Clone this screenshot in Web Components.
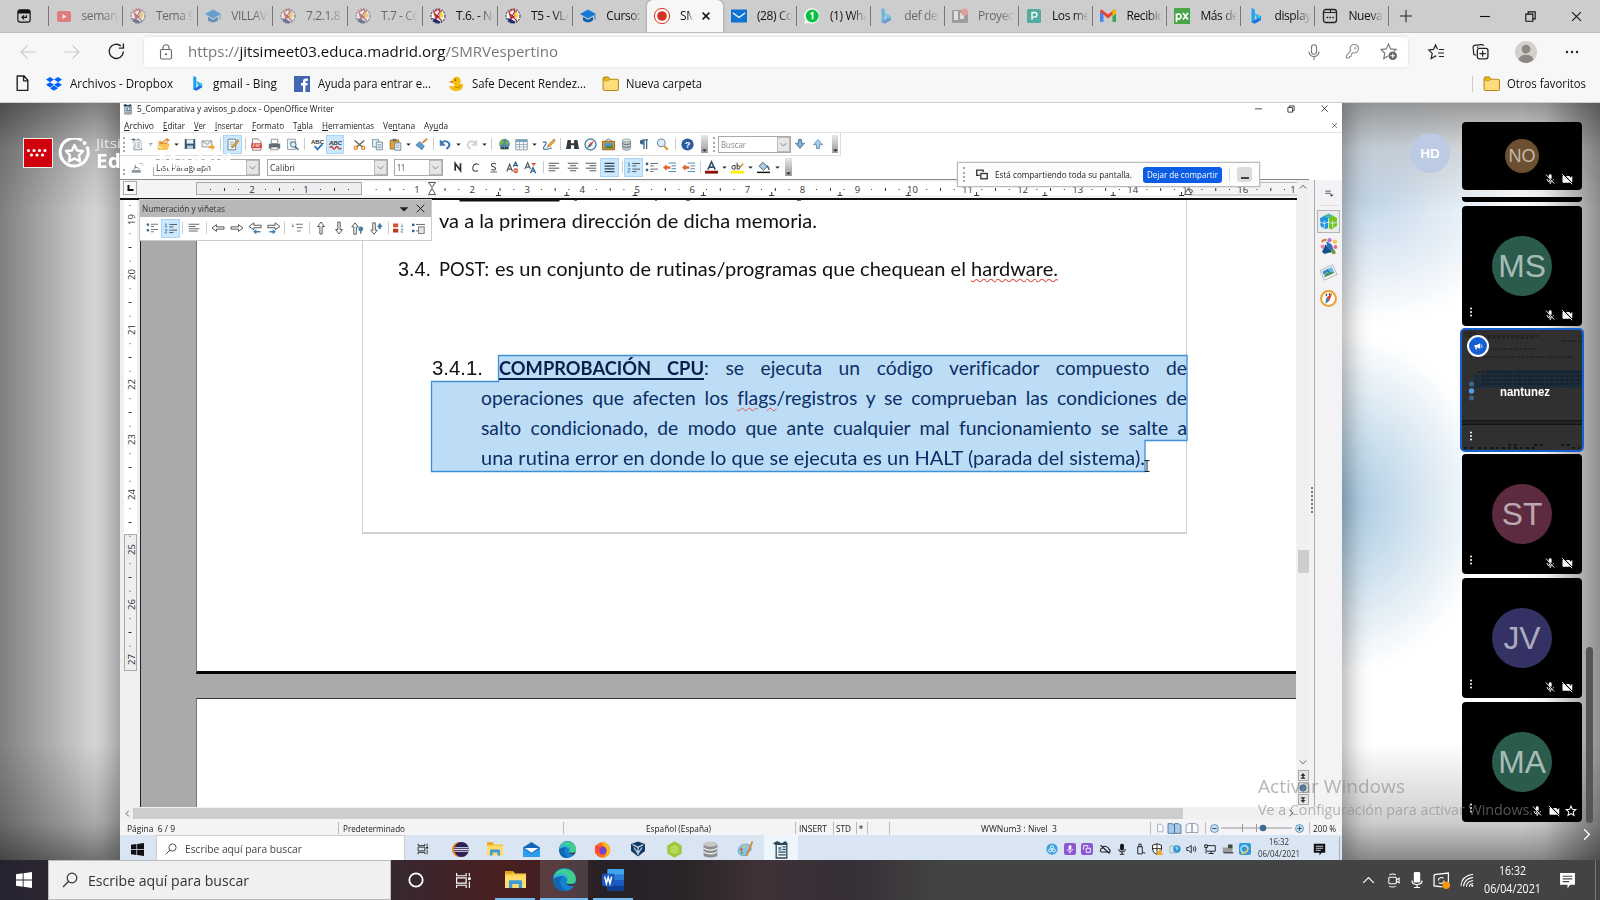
<!DOCTYPE html>
<html lang="es">
<head>
<meta charset="utf-8">
<title>SMRVespertino</title>
<style>
html,body{margin:0;padding:0}
body{width:1600px;height:900px;overflow:hidden;font-family:"Open Sans","Noto Sans",sans-serif;font-size:12px;color:#222}
</style>
</head>
<body>
<desktop-app></desktop-app>
<script>
const BASE = '*{box-sizing:border-box}';
function define(name, css, html, ready){
  customElements.define(name, class extends HTMLElement{
    connectedCallback(){
      if(this.shadowRoot) return;
      const r = this.attachShadow({mode:'open'});
      r.innerHTML = `<style>${BASE}${css}</style>` + (typeof html === 'function' ? html(this) : html);
      if(ready) ready(this, r);
    }
  });
}

/* Lays [x, width, markup] entries out in one flex line, turning the x values into gaps. */
function line(start, items){
  let end = start;
  return items.map(([x,w,h])=>{
    const m = x-end; end = x+w;
    return `<span style="display:flex;align-items:center;justify-content:center;flex:none;width:${w}px;height:100%;margin-left:${m}px">${h}</span>`;
  }).join('');
}
/* Same, with entries given by their centre. */
const mid = (c,w,h)=>[c-w/2,w,h];
const ic = (n,s=16)=>`<ui-icon name="${n}" size="${s}"></ui-icon>`;
const fit = (w,t,st='')=>`<fit-text w="${w}" style="${st}">${t}</fit-text>`;
const S = (c,w=1.2)=>`fill="none" stroke="${c}" stroke-width="${w}"`;
</script>
<script>
const ICONS = {
  tabact:`<rect x="1" y="1" width="14" height="14" rx="2.5" ${S('#111',1.3)}/><path d="M1 3.5q0-2.5 2.5-2.5h9q2.5 0 2.5 2.5v1.5H1z" fill="#111"/><path d="M10.8 7v2.5H6M8 7.2L5.7 9.5 8 11.8" ${S('#111',1.3)}/>`,
  yt:`<rect x="1" y="3" width="14" height="11" rx="2.5" fill="#f03a3a"/><path d="M6.5 6v5l4-2.5z" fill="#fff"/>`,
  moodle:`<circle cx="8" cy="8" r="7" fill="#fff"/><circle cx="8" cy="8" r="7" fill="none" stroke="#556" stroke-width="1.3" stroke-dasharray="2 1"/><path d="M4 4l4-2.5 3 2-1 4-4 3z" fill="#fff" stroke="#d5333a" stroke-width="1.4"/><path d="M5 6l4 4 3 3M10 3l-4 7" ${S('#a3222b',1.1)}/><path d="M10.5 3.5l3 3.5-2 4-2-3z" fill="#f5d33c"/><path d="M2 10l4 1 5 3-3 1.5-4-1.5z" fill="#242c70"/>`,
  cap:`<path d="M0 6l8-4.5L16 6 8 10.5z" fill="#1678d2"/><path d="M3 8.8v3.4c3 2.8 7 2.8 10 0V8.8L8 11.8z" fill="#1160ad"/><path d="M15 6.5v5" ${S('#1678d2',1)}/>`,
  rec:`<circle cx="8" cy="8" r="7.6" fill="#fff" stroke="#d93025" stroke-width="1"/><circle cx="8" cy="8" r="4.8" fill="#d93025"/>`,
  mailt:`<rect x="0" y="1.5" width="16" height="13" fill="#0f74d1"/><path d="M2 5l6 4.5L14 5" ${S('#fff',1.3)}/>`,
  wa:`<path d="M8 .2a7.7 7.7 0 1 1-3.8 14.5L.3 15.8l1-4A7.7 7.7 0 0 1 8 .2z" fill="#fff"/><circle cx="8.2" cy="8" r="6.5" fill="#0ac041"/><path d="M6.6 6l2-1.3v6.6" ${S('#fff',1.7)}/>`,
  bing:`<path d="M3.5 0l3.3 1.2v11.6L3.5 15z" fill="#1ca4f2"/><path d="M6.8 5.5l6.2 3v3.5L6.8 15.7 3.5 14l5.5-3.2z" fill="#1b6fe0"/><path d="M6.8 5.5l6.2 3-1 2.4-3.4-1.4z" fill="#25c7f5"/>`,
  proy:`<rect x="0" y="2" width="16" height="13" rx="1.5" fill="#777"/><rect x="2" y="3" width="4" height="9" fill="#eee"/><rect x="8" y="5" width="4" height="6" fill="#eee"/><circle cx="12.5" cy="4" r="3.5" fill="#ee7a70"/>`,
  pd:`<rect x="1" y="1" width="14" height="14" rx="1.5" fill="#53ab9f"/><path d="M6 12V4.5h2.5q2.5 0 2.5 2.3T8.5 9.2H6.5" ${S('#fff',1.3)}/>`,
  gm:`<path d="M0 3.5h3.5V14H1q-1 0-1-1z" fill="#4285f4"/><path d="M12.5 3.5H16V13q0 1-1 1h-2.5z" fill="#34a853"/><path d="M0 3.5Q1-.2 3.5 3L8 6.5 12.5 3Q15-.2 16 3.5L8 10.5z" fill="#ea4335"/><path d="M12.5 3Q15-.2 16 3.5v2l-3.5 2.7z" fill="#fbbc04"/>`,
  px:`<rect width="16" height="16" fill="#48a548"/><path d="M2.5 14V5.5M2.5 9a2.3 2.5 0 1 0 0-1M9 5l5 6.5M14 5l-5 6.5" ${S('#fff',1.7)}/>`,
  newt:`<rect x="1.5" y="1.5" width="13" height="13" rx="2.5" ${S('#222',1.3)}/><path d="M2 4.5h12M8.5 2v2.5" ${S('#222',1.2)}/><path d="M4.5 9.5h1.7M7.3 9.5H9M10.2 9.5h1.6" ${S('#222',1.7)}/>`,
  plus:`<path d="M8 1v14M1 8h14" ${S('#222',1.2)}/>`,
  x:`<path d="M2.5 2.5l11 11M13.5 2.5l-11 11" ${S('#111',1.3)}/>`,
  xb:`<path d="M3.5 3.5l9 9M12.5 3.5l-9 9" ${S('#111',2)}/>`,
  min:`<path d="M3 8.5h10" ${S('#111',1.1)}/>`,
  rest:`<path d="M3 5.5h7.5V13H3zM5.5 5.5V3H13v7.5h-2.5" ${S('#111',1.2)}/>`,
  back:`<path d="M15.5 8H1M7.5 1.5L1 8l6.5 6.5" ${S('#cacaca',1.1)}/>`,
  fwd:`<path d="M.5 8H15M8.5 1.5L15 8l-6.5 6.5" ${S('#cacaca',1.1)}/>`,
  reload:`<path d="M14.5 8a6.7 6.7 0 1 1-2.3-5.2M14.5.5v4.3h-4.3" ${S('#222',1.3)}/>`,
  lock:`<rect x="2.5" y="5.5" width="11" height="9.5" rx="1.5" ${S('#666',1.1)}/><path d="M5 5.5V3.7a3 3 0 0 1 6 0v1.8" ${S('#666',1.1)}/><circle cx="8" cy="10.2" r="1" fill="#555"/>`,
  mic:`<rect x="5.5" y="0.7" width="5" height="9.6" rx="2.5" ${S('#777',1.1)}/><path d="M3 7.5a5 5 0 0 0 10 0M8 12.7V16" ${S('#777',1.1)}/>`,
  key:`<path d="M8.3 9.2a4.5 4.5 0 1 0-2.3-2L1.5 12.5V15h3l.3-1.8 1.7-.2.2-1.9z" ${S('#888',1.1)}/><circle cx="11" cy="4.5" r="1" ${S('#888',.8)}/>`,
  starp:`<path d="M13 7.5L15 6.1l-5-.5L8 1 5.9 5.6 1 6.1l3.5 3.6-1 5L7.5 12.3" ${S('#777',1.1)}/><circle cx="12" cy="12" r="4" fill="#666"/><path d="M12 9.8v4.4M9.8 12h4.4" ${S('#fff',1)}/>`,
  starl:`<path d="M9.5 5.2L7.5 1 5.5 5.4.8 6l3.4 3.4-1 5.1 4.3-2.5.8.5M11 5.5h5M10 9h6M11 12.5h5" ${S('#222',1.2)}/>`,
  coll:`<path d="M4 11.5L1.7 10.8 1 4q0-1.4 1.3-1.7L9 1.5q1.5-.2 1.7 1.3M5 4.5q0-1 1-1" ${S('#222',1.1)}/><rect x="5" y="5" width="10" height="10" rx="2" ${S('#222',1.2)}/><path d="M10 7v6M7 10h6" ${S('#222',1.1)}/>`,
  user:`<circle cx="8" cy="8" r="8" fill="#d4d1cd"/><circle cx="8" cy="5.9" r="3.2" fill="#8d8882"/><path d="M2.5 13.5q1-3.5 5.5-3.5t5.5 3.5Q11 16 8 16t-5.500-2.500z" fill="#8d8882"/>`,
  dots:`<circle cx="3" cy="8" r="1.2" fill="#222"/><circle cx="8" cy="8" r="1.2" fill="#222"/><circle cx="13" cy="8" r="1.2" fill="#222"/>`,
  page:`<path d="M3 1h6.5L13 5v9.5H3zM9 1.2V5.5h4" ${S('#222',1.3)} stroke-linejoin="round"/>`,
  dbx:`<path d="M4 1l4 2.6L4 6.2 0 3.6zM12 1l4 2.6-4 2.6-4-2.6zM4 6.2l4 2.6-4 2.6L0 8.8zM12 6.2l4 2.6-4 2.6-4-2.6zM4 12.2l4-2.6 4 2.6-4 2.6z" fill="#0061fe"/>`,
  fb:`<rect width="16" height="16" fill="#4267b2"/><path d="M9 16V9.5H7V7h2V5.3Q9 2.5 12 2.5h1.8v2.4h-1.3q-1.1 0-1.1 1V7h2.3l-.4 2.5h-1.9V16z" fill="#fff"/>`,
  duck:`<circle cx="8.5" cy="5" r="4.2" fill="#f6bc0b"/><path d="M4.8 4.5L.5 5.8l4.3 1.4z" fill="#e0801a"/><path d="M1.5 9q2 2.5 6 0 4-2 7.5-1 .5 7-6.5 7T1.5 9z" fill="#f6bc0b"/><circle cx="7.5" cy="4" r=".8" fill="#222"/><path d="M7 11q3 2 6-1" ${S('#b77a00',.8)}/>`,
  folder:`<path d="M1 3.5q0-1.5 1.5-1.5h3.3L7.5 4H14q1.5 0 1.5 1.5v7.7q0 1.3-1.5 1.3H2.5Q1 14.5 1 13z" fill="#ffdc7d" stroke="#b98a17" stroke-width="1"/><path d="M1.5 5.5h4L7.5 4l-1.7-1.8H2.5z" fill="#edb912" stroke="#b98a17" stroke-width=".6"/>`,
  win:`<path d="M0 2.3l6.7-1v6.2H0zM7.6 1.2L16 0v7.5H7.6zM0 8.4h6.7v6.3L0 13.7zM7.6 8.4H16V16l-8.4-1.2z" fill="currentColor"/>`,
  mag:`<circle cx="10" cy="6" r="4.8" ${S('currentColor',1.2)}/><path d="M6.5 9.5L1 15" ${S('currentColor',1.3)}/>`,
  cort:`<circle cx="8" cy="8" r="6.7" ${S('#fff',1.8)}/>`,
  tview:`<path d="M1.5 1v2.5h9V1M1.5 15v-2.5h9V15M1.5 5.5h9v5h-9zM13.5 1v3M13.5 9v6" ${S('currentColor',1.1)}/><rect x="12.3" y="5" width="2.5" height="2.5" fill="currentColor"/>`,
  expl:`<path d="M0 1.5h6l1.5 2H16V14H0z" fill="#f8c93e"/><path d="M0 5h16v9.5H0z" fill="#ffdb6c"/><path d="M3 14.5V9.5q0-1 1-1h8q1 0 1 1v5h-2.5v-3h-5v3z" fill="#3f9bd8"/><path d="M0 1.5h6v2H0z" fill="#e2a118"/>`,
  edge:`<circle cx="8" cy="8" r="8" fill="#1683d2"/><path d="M.3 6.5A8 8 0 0 1 16 7.5q0 3.5-3.8 3.5-2.7 0-3-1 1.3-1 .8-2.5C9 5 3 3.5.3 6.5z" fill="#3ecf8e"/><path d="M.3 6.5Q4 2.5 8.5 5.5 5 6 5 9.5q0 4 4.5 6.4Q2 17 .2 10z" fill="#1266b4"/><path d="M0 8q1-5 7-4.2Q11 4.7 10 8 8.5 5 4.5 5.8 1.5 6.2 0 8z" fill="#30b7d6"/><path d="M9 10.1Q10 11.5 13 11.3q2.2 0 2.6-1.3l-.8 2.3q-4 1-5.8-2.2z" fill="#4b2a33"/>`,
  word:`<rect x="4" y="0" width="12" height="16" rx="1" fill="#2b7cd3"/><path d="M4 0h11q1 0 1 1v3H4z" fill="#41a5ee"/><path d="M4 8h12v4H4z" fill="#185abd"/><path d="M4 12h12v3q0 1-1 1H5q-1 0-1-1z" fill="#103f91"/><rect x="0" y="3.5" width="9" height="9" rx="1" fill="#185abd"/><path d="M2 5.5l1.2 5L4.5 6l1.3 4.5L7 5.5" ${S('#fff',1.1)}/>`,
  ecl:`<circle cx="7" cy="8" r="7" fill="#e88a1a"/><circle cx="9" cy="8" r="7" fill="#2c2255"/><path d="M2.3 6.3h13.5M2 8h14M2.3 9.7h13.5" ${S('#e9e4f5',.9)}/>`,
  mailw:`<path d="M0 6l8-5 8 5v9H0z" fill="#1466b8"/><path d="M1.5 6.5h13L8 11z" fill="#fff"/><path d="M0 6.5L8 12l8-5.5V15H0z" fill="#2a9df0"/>`,
  ff:`<circle cx="8" cy="8.5" r="7.3" fill="#ff6b1c"/><path d="M9 0q6 4 6.3 9-1 6-7 6.8Q12 13 12 9T7 3q2-1 2-3z" fill="#ffbb22"/><circle cx="8" cy="9" r="3.7" fill="#7542c9"/><path d="M1 4q3 1 6 1.5Q4 8 6 11l-4.5 1z" fill="#ff4438"/>`,
  vbox:`<path d="M1 3l7-2.5L15 3v7l-7 5.5L1 10z" fill="#173a63"/><path d="M2.5 3.5l5.5 2.8 5.5-2.8M8 6.5V14M4 6.5l4 6 4-6" ${S('#cbe0f2',1.2)}/>`,
  hex:`<path d="M8 .3l6.8 3.9v7.6L8 15.7 1.2 11.8V4.2z" fill="#9cc83c"/><path d="M8 3.5l4 2.3v4.6L8 12.5l-4-2.1V5.8z" fill="#b5db5a"/>`,
  dbg:`<path d="M1.5 3v10q0 2.5 6.5 2.5t6.500-2.500V3z" fill="#8d8d8d"/><path d="M1.5 6.5q2 2 6.5 2t6.500-2M1.5 10q2 2 6.5 2t6.500-2" ${S('#ececec',1.2)}/><ellipse cx="8" cy="3" rx="6.5" ry="2.5" fill="#c6c6c6"/>`,
  paint:`<path d="M1 9q1-6 7-6t5.500 5q-.5 2-3 1.8-2 0-1.5 2 .2 2.2-2 2.2Q1 14 1 9z" fill="#8cc4e6" stroke="#5a88a8" stroke-width=".5"/><circle cx="4" cy="8" r="1.1" fill="#e54040"/><circle cx="7" cy="5.5" r="1.1" fill="#f3c61c"/><circle cx="4.5" cy="11" r="1.1" fill="#3da646"/><path d="M14.5.5L9 14" ${S('#d38830',1.7)}/>`,
  writer:`<path d="M3 3h10v13H3z" fill="#f2f8fc" stroke="#2a4658" stroke-width="1.2"/><path d="M0 2l4-2 4 2 4-2 2 3-6 1-6-.5z" fill="#2a4658"/><path d="M9 5.5h3M9 8h3M5 10.5h7M5 13h7" ${S('#2a4658',1.2)}/><path d="M5 5.5h3V9H5z" fill="#5a90b4"/>`,
  newdoc:`<path d="M3.5 2h7L13 5v9.5H3.5z" fill="#e9f0f5" stroke="#78858f" stroke-width="1"/><path d="M1 2.5q2-2 4 0t4-1.5" ${S('#4a6575',1.5)}/><path d="M5 6h6M5 8.5h6M5 11h6" ${S('#90a0ac',1.2)}/>`,
  open:`<path d="M1 3.5h5l1.5 2H13V14H1z" fill="#d48b25"/><path d="M3.5 7H16l-3 7.5H1z" fill="#ffc355"/><path d="M8 5q1-3.5 5-2.5M11.5.5l3 2-2.2 2.3" ${S('#d9781e',1.4)}/>`,
  save:`<path d="M1 1.5h14v13H1z" fill="#33566d"/><rect x="3.5" y="2" width="9" height="5.5" fill="#eaf3f9"/><rect x="4" y="10" width="8" height="4.5" fill="#b9cbd6"/>`,
  mailo:`<path d="M0 3.5h12v7.5H0z" fill="#f3f3ee" stroke="#7f8a90"/><path d="M0 3.5l6 4.5 6-4.5" ${S('#7f8a90',1)}/><path d="M8 10h4V7.5l4 4-4 3.5v-2.5H8z" fill="#f1a52d"/>`,
  edit:`<path d="M2.5 1.5h9.5v13H2.5z" fill="#fff" stroke="#52707e"/><path d="M4.5 5h5M4.5 7.5h5M4.5 10h3" ${S('#7592a1',1)}/><path d="M14.5 2L8 9.5l-1 3 2.7-1.3L16 4z" fill="#f0a536" stroke="#7c4c1c" stroke-width=".6"/>`,
  pdf:`<path d="M3 1h7l3.5 3.5V15H3z" fill="#f6f6f6" stroke="#87666a"/><rect x="1.5" y="6.5" width="13" height="6" fill="#d6453c"/><path d="M4 11V8.3h2M7.5 11V8.3h1.5v2.3M12.7 8.3h-2V11" ${S('#fff',.9)}/>`,
  print:`<path d="M4 1.5h8V7H4z" fill="#fff" stroke="#70787c"/><path d="M1 7h14v6H1z" fill="#626e75"/><path d="M3.5 11h9v3.5h-9z" fill="#e9eef0" stroke="#555" stroke-width=".7"/>`,
  prev:`<path d="M2 1.5h9.5V14H2z" fill="#fff" stroke="#74848e"/><path d="M4 4.5h5M4 7h3" ${S('#8fa0ab',1)}/><circle cx="9" cy="8" r="3.4" fill="#d3ebfa" stroke="#48687c" stroke-width="1.2"/><path d="M11.3 10.5l4 4" ${S('#48687c',1.9)}/>`,
  abc:`<text x="8" y="7" text-anchor="middle" font-size="7.5" font-weight="700" font-family="Liberation Sans" fill="#333">ABC</text><path d="M4.5 10l3.5 4 6-6.5" ${S('#2f79b9',2.2)}/>`,
  abcr:`<text x="8" y="8" text-anchor="middle" font-size="7.5" font-weight="700" font-family="Liberation Sans" fill="#333">ABC</text><path d="M1 12q1.7-3 3.5 0t3.500 0 3.500 0 3.500 0" ${S('#cf2c1e',1.7)}/>`,
  cut:`<path d="M2 3l10 8.5M14 3L4 11.5" ${S('#5a6468',1.7)}/><circle cx="3.5" cy="12" r="2" ${S('#e5862a',1.6)}/><circle cx="12.5" cy="12" r="2" ${S('#e5862a',1.6)}/>`,
  copy:`<path d="M2 2h7.5v9H2z" fill="#eef4f8" stroke="#5e7f92"/><path d="M6.5 5h7.5v9.5H6.5z" fill="#eef4f8" stroke="#5e7f92"/><path d="M8 8h4.5M8 10h4.5M8 12h4.5" ${S('#6e97b1',.9)}/>`,
  paste:`<path d="M1.5 2.5h10.5v11H1.5z" fill="#e1a23a" stroke="#8c5f1b"/><path d="M4.5 1h4.5v3H4.5z" fill="#65717a"/><path d="M7 6h7.5v9H7z" fill="#eaf3fa" stroke="#5e7f92"/><path d="M8.5 9h4.5M8.5 11.5h4.5" ${S('#6e97b1',.9)}/>`,
  brush:`<path d="M15 1L9 6" ${S('#d38a35',2.4)}/><path d="M6 4.5l5.5 5.5-3 4.5-7.5-6z" fill="#5e9dd1" stroke="#2e5d86" stroke-width=".7"/>`,
  undo:`<path d="M2 6q6-4 10 0 2.5 4-3 7.5" ${S('#3c7ab0',2.6)}/><path d="M1 1.5V9.5h7.5z" fill="#3c7ab0"/>`,
  redo:`<path d="M14 6Q8 2 4 6q-2.5 4 3 7.5" ${S('#cfd3d5',2.2)}/><path d="M15 1.5V9.5H7.5z" fill="#cfd3d5"/>`,
  globe:`<circle cx="8" cy="7.5" r="6.5" fill="#4e86ad"/><path d="M3 3q3-2 4 0T5 8 2 7zM10 2.5l3.5 3-2.5 4-2-3z" fill="#82b541"/><path d="M3 12.5h4.5M8.5 12.5H13" ${S('#344',2.4)}/>`,
  table:`<path d="M1 2h14v12.5H1z" fill="#fff" stroke="#708694"/><path d="M1 2h14v3H1z" fill="#7fa6c3"/><path d="M1 8h14M1 11h14M5.5 2v12M10.5 2v12" ${S('#8299a8',.9)}/>`,
  draw:`<path d="M15 1L8 8l-1.5 3.5L10 10l6-6z" fill="#f0a536" stroke="#88561c" stroke-width=".6"/><path d="M1 5h4q1 1-2 5t1 4 8-2" ${S('#4179af',1.4)}/>`,
  bino:`<path d="M2 2.5h4v4h4v-4h4l2 11h-6V9H6v4.5H0z" fill="#333b40"/>`,
  comp:`<circle cx="8" cy="8" r="6.8" fill="#eef6fb" stroke="#47718e" stroke-width="1.5"/><path d="M12.5 3L9 9.5 6.8 7z" fill="#dc3e33"/><path d="M3.5 13l3.3-6L9 9.5z" fill="#35617f"/>`,
  gal:`<path d="M0.5 4h15v10.5H.5z" fill="#dd9226" stroke="#85541a"/><rect x="3" y="6" width="10" height="6.5" fill="#4b96c6"/><path d="M3 12.5l4-3 3 1 3-1.5v3.5z" fill="#4f7c2c"/><path d="M4 4l4-3 4 3" ${S('#555',1)}/>`,
  db:`<path d="M3 3v10q0 2 5 2t5-2V3z" fill="#c7ced2" stroke="#6c7880" stroke-width=".8"/><path d="M3 6.5q1.5 1.5 5 1.5t5-1.500M3 10q1.5 1.5 5 1.5T13 10" ${S('#56626a',1.2)}/><ellipse cx="8" cy="3" rx="5" ry="1.8" fill="#e6eaec" stroke="#6c7880" stroke-width=".8"/>`,
  pil:`<path d="M7 2.5h6.5M8 3v11.5M11.5 3v11.5" ${S('#386488',1.7)}/><path d="M7.5 2q-5-.3-5 3.3T7.5 8.8z" fill="#386488"/>`,
  zoom:`<circle cx="6.5" cy="6" r="4.7" fill="#d9edfa" stroke="#74899a" stroke-width="1.3"/><path d="M9.8 9.5l4.7 5" ${S('#d79330',2.4)}/>`,
  help:`<circle cx="8" cy="8" r="7.5" fill="#2c5aa2"/><text x="8" y="12" text-anchor="middle" font-size="11.5" font-weight="700" font-family="Liberation Sans" fill="#fff">?</text>`,
  down:`<path d="M6 2h4v5h4l-6 7-6-7h4z" fill="#7db3da" stroke="#33658d"/>`,
  up:`<path d="M6 14h4V9h4L8 2 2 9h4z" fill="#a6cdea" stroke="#4b82ab"/>`,
  styles:`<path d="M4 10l3-7 3 7M5 8h4" ${S('#7e8a92',1.5)}/><rect x="1" y="11" width="11" height="3.5" fill="#8d989f"/><path d="M10 3h4v5h-3" ${S('#9cb4c4',1)}/>`,
  supA:`<path d="M1 13L4.5 4 8 13M2.2 10h4.5" ${S('#45525a',1.4)}/><path d="M9 7l2.8-5.5L14.5 7M10 5.5h3.5" ${S('#2c5f88',1.5)}/><circle cx="12" cy="12" r="3" fill="#d5552f"/><path d="M10 12h4" ${S('#fff',1)}/>`,
  subA:`<path d="M1 10L4.5 2 8 10M2.2 7.5h4.5" ${S('#45525a',1.4)}/><path d="M8 15l3-7 3.5 7M9 12.5h4.5" ${S('#2c5f88',1.5)}/><path d="M9 2.5h6l-3 3.5z" fill="#d5552f"/>`,
  al:`<path d="M1 3h14M1 6.3h9M1 9.6h14M1 13h9" ${S('#444',1.2)}/>`,
  ac:`<path d="M1 3h14M4 6.3h8M1 9.6h14M4 13h8" ${S('#444',1.2)}/>`,
  ar:`<path d="M1 3h14M6 6.3h9M1 9.6h14M6 13h9" ${S('#444',1.2)}/>`,
  aj:`<path d="M2 3h12M2 6.3h12M2 9.6h12M2 13h12" ${S('#30404c',1.5)}/>`,
  num:`<path d="M2.5 2v4M1 2.5h1.5M1 6h3M1 9.5h3l-3 4h3" ${S('#3d7fae',1)}/><path d="M6.5 3H16M6.5 6h5M6.5 10H16M6.5 13h5" ${S('#555',1.2)}/>`,
  bul:`<rect x="1" y="2" width="3" height="3" fill="#30618a"/><rect x="1" y="9.5" width="3" height="3" fill="#30618a"/><path d="M6.5 3H16M6.5 6h4M6.5 10H16M6.5 13h4" ${S('#666',1.2)}/>`,
  outd:`<path d="M0 8l4.5-4v2.5H9v3H4.5V12z" fill="#e0622b"/><path d="M7 2.5h9M10.5 6H16M10.5 9.5H16M7 13h9" ${S('#4b87ad',1.2)}/>`,
  fontc:`<path d="M3.5 10.5L8 1l4.5 9.5M5 7.5h6" ${S('#32536b',2)}/><rect x="0" y="12" width="16" height="3.5" fill="#8c0f0a"/>`,
  hil:`<path d="M1 8q0-3 4-2.5V10H3q-2 0-2-2M7.5 2v8h1.5q2 0 2-2.2T7.5 5.5" ${S('#333',1.2)}/><path d="M15 3l-4 5" ${S('#d29b30',2)}/><rect x="0" y="12" width="16" height="3.5" fill="#fff200"/>`,
  bgc:`<path d="M7 1.5l6 5-5 5-5.5-5z" fill="#a9c9df" stroke="#3a5a70"/><path d="M12 6q3 2 2.5 5" ${S('#30618a',1.8)}/><path d="M0 14h16" ${S('#111',1.8)}/>`,
  list:`<path d="M1 3h14M1 6h9M1 9h14M1 12h12" ${S('#555',1.2)}/>`,
  la:`<path d="M0 8l6-4.5v3h10v3H6v3z" fill="#fff" stroke="#555" stroke-width="1.3"/>`,
  ra:`<path d="M16 8l-6-4.5v3H0v3h10v3z" fill="#fff" stroke="#555" stroke-width="1.3"/>`,
  la2:`<path d="M0 5.5l6-4.5v3h9v3H6v2.5z" fill="#fff" stroke="#555" stroke-width="1.2"/><path d="M5 12l4-3v2h5v2H9v2z" fill="#3f7fb0"/>`,
  ra2:`<path d="M16 5.5L10 1v3H1v3h9v2.5z" fill="#fff" stroke="#555" stroke-width="1.2"/><path d="M11 12L7 9v2H3v2h4v2z" fill="#3f7fb0"/>`,
  ua:`<path d="M8 0l4.5 6h-3v10h-3V6h-3z" fill="#fff" stroke="#555" stroke-width="1.3"/>`,
  da:`<path d="M8 16l4.5-6h-3V0h-3v10h-3z" fill="#fff" stroke="#555" stroke-width="1.3"/>`,
  ua2:`<path d="M5 1l4 5H6.5v9H3.5V6H1z" fill="#fff" stroke="#555" stroke-width="1.2"/><circle cx="12" cy="8.5" r="3" fill="#3f7fb0"/><path d="M12 9v5.5" ${S('#3f7fb0',1.8)}/>`,
  da2:`<path d="M5 15l4-5H6.5V1H3.5v9H1z" fill="#fff" stroke="#555" stroke-width="1.2"/><path d="M12 1l3.5 5h-2v2.5h-3V6h-2z" fill="#3f7fb0"/>`,
  onum:`<path d="M2.5 2v4M1 6h3" ${S('#3d7fae',1)}/><path d="M6.5 3H16M8 7.5h7M8 12h5" ${S('#666',1.2)}/>`,
  brk:`<rect x="0" y="2" width="7" height="5" fill="#d6542c"/><rect x="0" y="9" width="7" height="5" fill="#b23d1c"/><path d="M12 2v4M10.5 6h3M10.5 9.5h3l-3 4h3" ${S('#54819f',1)}/>`,
  opt:`<rect x="0" y="2" width="3" height="3" fill="#30618a"/><rect x="0" y="9.5" width="3" height="3" fill="#30618a"/><path d="M5 3h11M5 11h3" ${S('#666',1.2)}/><rect x="8" y="6" width="7" height="8" fill="#dde6ec" stroke="#666"/>`,
  N:`<path d="M3.5 14V2.5l8.5 11V2" ${S('#2c2c2c',2.7)}/>`,
  C:`<path d="M13 4.5Q12 2.5 9 2.5 4.5 3.5 4 9q.2 5 4.5 4.5 2 0 3-1.5" ${S('#3c3c3c',1.5)}/>`,
  Su:`<path d="M11.5 2.8Q5 .5 5 4.3q0 2 3 2.7 3.3.8 3.2 2.7-.8 3-6.2 1.2" ${S('#3c3c3c',1.5)}/><path d="M3.5 14.5h9.5" ${S('#3c3c3c',1.2)}/>`,
  smenu:`<path d="M2 5h9M2 8.5h9" ${S('#555e70',1.6)}/><path d="M9 10.5h6l-3 3.5z" fill="#334"/>`,
  cube:`<path d="M0 5l4-2.5L8 4v10l-3 1L.5 12.5z" fill="#1e93dd"/><path d="M8 5l4.5-2.5L16 5v7l-5 3.5L8 14z" fill="#74c51a"/><path d="M3.5 2.8L8 .5l4.5 2L8 5.5z" fill="#43b8a8"/><path d="M8 5v9M4 7v7M12 7v7M0 8.5l4 1.5 4-1.5 4 1.5 4-1.5" ${S('#d4f0ff',.8)}/>`,
  party:`<path d="M5 6l7 7-8 2-2-2z" fill="#174f8c"/><path d="M6 3l5 3 2 6-6-2z" fill="#2c6fb4"/><circle cx="2.5" cy="8" r="2" fill="#f285b9"/><circle cx="9" cy="2" r="2" fill="#b273e0"/><circle cx="14" cy="3.5" r="2" fill="#f6c74c"/><circle cx="14.5" cy="8.5" r="1.8" fill="#f0617c"/><path d="M2 4q1-3 4-2M12 11l2 4" ${S('#d97c29',2)}/><circle cx="12.5" cy="13" r="2" fill="#5ba23f"/>`,
  pics:`<g transform="rotate(-25 8 8)"><rect x="1.5" y="3" width="13" height="10" fill="#f6f8f8" stroke="#a5acae" stroke-width=".7"/><rect x="3" y="4.5" width="10" height="6" fill="#65b7ea"/><path d="M3 10.5l3-3 3 2 2-1 2 2z" fill="#4f9b2d"/></g><path d="M3 9l4-3 3 3" ${S('#3a7fb5',1.8)}/>`,
  navi:`<circle cx="8" cy="8" r="7" fill="#fff" stroke="#f0a028" stroke-width="1.9"/><path d="M11.5 3L9 10 6 7z" fill="#d94432"/><path d="M5 13l1-6 3 3z" fill="#377cb9"/><path d="M6 3.5v2M9 3v2" ${S('#333',1.3)}/>`,
  share:`<path d="M5 8.5H1v-7h8.5V4" ${S('#333',1.8)}/><rect x="6.5" y="6" width="8.5" height="7" ${S('#333',1.8)}/>`,
  micoff:`<path d="M6.3 6V3.5a1.9 1.9 0 0 1 3.9 0V8zM6.3 8l3 3q-2.5.5-3-2z" fill="#fff"/><path d="M4 8q.3 4 4.2 4 2 0 3-1M12.5 8q0 1-.4 1.8M8.3 12v2.8M2.5 2l11 12" ${S('#fff',1.2)}/>`,
  camoff:`<path d="M2 4h1.5l9 9H3q-1 0-1-1zM6.5 4H11q.8 0 .8.8v2L15 4v9z" fill="#fff"/><path d="M1.5 1.5L15 15" ${S('#fff',1.2)}/>`,
  star:`<path d="M8 1.5l1.9 4.3 4.6.4-3.5 3.1 1 4.6-4-2.4-4 2.4 1-4.6L1.5 6.2l4.6-.4z" ${S('#fff',1.4)}/>`,
  more:`<circle cx="8" cy="2.5" r="1.6" fill="#fff"/><circle cx="8" cy="8" r="1.6" fill="#fff"/><circle cx="8" cy="13.5" r="1.6" fill="#fff"/>`,
  horn:`<path d="M1 5.5h4L11 2v10L5 9.5v4H2.5v-4H1z" fill="#fff"/><path d="M13 4.5q2 3 0 6" ${S('#fff',1.3)}/>`,
  t1:`<circle cx="8" cy="8" r="7.5" fill="#3ba0e0"/><circle cx="8" cy="5.5" r="2" ${S('#fff',1.2)}/><circle cx="5.5" cy="10" r="2" ${S('#fff',1.2)}/><circle cx="10.5" cy="10" r="2" ${S('#fff',1.2)}/>`,
  t2:`<rect width="16" height="16" rx="3" fill="#8b57d3"/><rect x="6.2" y="3" width="3.6" height="6.5" rx="1.8" fill="#fff"/><path d="M4.5 8q.5 3.5 3.5 3.5T11.5 8M8 11.5V14" ${S('#fff',1.1)}/>`,
  t3:`<rect width="16" height="16" rx="3" fill="#8b57d3"/><path d="M3.5 9V3.5H9V6M7 7h5.5v5.5H7z" ${S('#fff',1.2)}/>`,
  t4:`<path d="M2 11q-1-3.5 2.5-4Q6 3 10 5q3 .5 3 3 2.5 1 1.5 4H4q-1.5 0-2-1zM2 3l12 11" ${S('#222',1.5)}/>`,
  t5:`<rect x="5.5" y="1" width="5" height="9" rx="2" fill="#111"/><path d="M3.5 8q0 4 4.5 4t4.500-4M8 12v3M5 15h6" ${S('#111',1.2)}/>`,
  t6:`<path d="M5 5h6v9.5H5zM6.5 5V1.5h3V5M12 12l3 2" ${S('#222',1.3)}/>`,
  t7:`<path d="M8 1l6 2v5q0 5-6 7.5Q2 13 2 8V3z" fill="#fff" stroke="#222" stroke-width="1.3"/><path d="M8 1v14M2 7.5h12" ${S('#222',1.2)}/><path d="M11.5 8l4.5 8H7z" fill="#f5a81c"/>`,
  t8:`<rect x="1" y="4" width="11" height="9" rx="1" fill="#d8e6ef" stroke="#8aa"/><circle cx="10.5" cy="8" r="5" fill="#2f96dc"/><path d="M8 5q3-2 4 1t-2 4z" fill="#83cdf6"/>`,
  t9:`<path d="M1 6h2.5L7 3v10L3.5 10H1zM9.5 5.5q2 2.5 0 5M11.8 4q3 4 0 8" ${S('#222',1.2)}/>`,
  t10:`<path d="M4 3.5h11v7.5H4M9.5 11v3M6 14h7M1 2.5h3.5V6H1zM2.8 6v8" ${S('#222',1.3)}/>`,
  t11:`<rect x="1" y="6" width="13" height="7" fill="#9b9b9b"/><rect x="8" y="2" width="6" height="5" fill="#444"/><path d="M2 13h13" ${S('#555',2)}/>`,
  t12:`<rect width="16" height="16" rx="3" fill="#2f9ae0"/><circle cx="7" cy="8" r="4.5" ${S('#d9efff',1.5)}/><path d="M3 14q7 0 10-8" ${S('#f7c53c',1.8)}/>`,
  note:`<path d="M1 1h14v11h-4.5L8 15.5V12H1z" fill="currentColor"/><path d="M3.5 4h9M3.5 6.5h9M3.5 9h6" stroke="var(--cut)" stroke-width="1.1"/>`,
  o1:`<path d="M4 4.5h6q1 0 1 1v5q0 1-1 1H4q-1 0-1-1v-5q0-1 1-1zM11 7.5l3-2v5l-3-2M3.5 2q3.5-2 7 0M3.5 14q3.5 2 7 0" ${S('#fff',1.1)}/>`,
  o2:`<rect x="4.8" y="0" width="6.4" height="10.5" rx="1.2" fill="#fff"/><path d="M3 8.5q0 4 5 4t5-4M8 12.5V16M5 15.5h6" ${S('#fff',1.2)}/>`,
  o3:`<path d="M1 2.5L14.5 1v9M9 14L1 13V2.5" ${S('#fff',1.2)}/><path d="M5 8a3 3 0 0 1 5-2M10.5 8a3 3 0 0 1-5 2" ${S('#fff',1.1)}/><circle cx="12.5" cy="12.5" r="3.5" fill="#f99a0c"/>`,
  o4:`<path d="M1 15Q2 3 15 1.5M4 15.3Q5 6.5 15 5M7.2 15.5Q8 9.5 15 8.5M10.5 15.5Q11 12.5 15 12" ${S('#fff',1.2)}/><circle cx="14" cy="14.5" r="1.2" fill="#fff"/>`,
  p1:`<path d="M4 2h6l3 3v9H4z" fill="#f8fbfd" stroke="#7a8fa0"/>`,
  p2:`<path d="M0 2h5l3 2v10H0zM8 2h5l3 2v10H8z" fill="#a9c9ea" stroke="#3e6ea0"/>`,
  p3:`<path d="M0 4l4-2h4v12H0zM16 4l-4-2H8v12h8z" fill="#f8fbfd" stroke="#7a8fa0"/>`,
  zmin:`<circle cx="8" cy="8" r="7" fill="#cfe6f7" stroke="#4f81a8" stroke-width="1.5"/><path d="M4 8h8" ${S('#2a5a80',2)}/>`,
  zplus:`<circle cx="8" cy="8" r="7" fill="#cfe6f7" stroke="#4f81a8" stroke-width="1.5"/><path d="M4 8h8M8 4v8" ${S('#2a5a80',2)}/>`,
  dup:`<path d="M3 8l5-6 5 6zM3 13.5l5-6 5 6z" fill="#333"/>`,
  ddn:`<path d="M3 8l5 6 5-6zM3 2.5l5 6 5-6z" fill="#333"/>`,
  ball:`<circle cx="8" cy="8" r="6.5" fill="#4a7ba6" stroke="#2d5272"/>`,
  chr:`<path d="M5 1.5L11.5 8 5 14.5" ${S('currentColor',1.6)}/>`,
  chl:`<path d="M11 1.5L4.5 8l6.5 6.5" ${S('currentColor',1.6)}/>`,
  chu:`<path d="M1.5 11L8 4.5l6.5 6.5" ${S('currentColor',1.5)}/>`,
  chd:`<path d="M1.5 5L8 11.5 14.5 5" ${S('currentColor',1.5)}/>`,
  car:`<path d="M1 5h14l-7 7z" fill="#222"/>`
};
</script>
<script>
define('ui-icon', ':host{display:block;flex:none}svg{display:block;overflow:visible}', el=>{
  const s = el.getAttribute('size')||16;
  return `<svg width="${s}" height="${s}" viewBox="0 0 16 16">${ICONS[el.getAttribute('name')]||''}</svg>`;
});

/* Text that is condensed or widened to an exact width. */
define('fit-text', ':host{display:block;flex:none;white-space:nowrap}span{display:inline-block;transform-origin:0 50%}', '<span><slot></slot></span>', (el,r)=>{
  const w = +el.getAttribute('w'), s = r.querySelector('span');
  el.style.width = w+'px';
  const n = s.getBoundingClientRect().width;
  if(n) s.style.transform = `scaleX(${w/n})`;
});
</script>
<script>
define('browser-tab', `
:host{display:flex;align-items:center;flex:none;height:32px;position:relative}
:host([dim]) .in{opacity:.55}
.in{display:flex;align-items:center;height:100%;width:100%;padding-left:7px}
.t{margin-left:10px;flex:1;overflow:hidden;white-space:nowrap;font-size:12px;letter-spacing:-.4px;color:#111;margin-right:4px;-webkit-mask-image:linear-gradient(90deg,#000 60%,transparent);line-height:20px}
.bar{width:1px;height:20px;background:#777;flex:none}
:host([active]){background:#f7f7f7;border-radius:6px 6px 0 0;box-shadow:0 0 3px #0005;clip-path:inset(0 -4px 0 -4px)}
:host([active]) .bar{display:none}
:host([active]) .t{margin-right:7px}`,
 el=>`<span class="bar" style="${el.hasAttribute('nobar')?'visibility:hidden':''}"></span><span class="in">${ic(el.getAttribute('icon'),16)}<span class="t"><slot></slot></span>${el.hasAttribute('active')?`<span style="margin-right:11px">${ic('xb',12)}</span>`:''}</span>`);

const TABS = [[47.5,'yt','semana',1],[122,'moodle','Tema 9 -',1],[197.3,'cap','VILLAVE',1],[272,'moodle','7.2.1.8 -',1],[347,'moodle','T.7 - Co',1],[422,'moodle','T.6. - No',0],[497,'moodle','T5 - VLA',0],[572.3,'cap','Curso: R',0],[647,'rec','SMR',0,'active'],[723,'mailt','(28) Cor',0,'nobar'],[796,'wa','(1) What',0],[870.3,'bing','def de d',1],[944,'proy','Proyect',1],[1018,'pd','Los mej',0],[1092.5,'gm','Recibid',0],[1166.5,'px','Más de',0],[1240.5,'bing','display',0],[1314.5,'newt','Nueva',0]];
const tabItems = TABS.map((t,i)=>{
  const nx = (i < TABS.length-1) ? TABS[i+1][0] : 1388;
  return [t[0], nx-t[0], `<browser-tab style="width:100%" icon="${t[1]}" ${t[3]?'dim':''} ${t[4]||''}>${t[2]}</browser-tab>`];
});
define('tab-strip', ':host{display:flex;height:32px;background:#cdcdcd;align-items:center}',
  line(0, [[16,16,ic('tabact',14)], ...tabItems, [1388,1,'<i style="width:1px;height:20px;background:#777"></i>'],[1399,14,ic('plus',14)],[1477,16,ic('min',16)],[1523,16,ic('rest',15)],[1569,16,ic('x',13)]]));
</script>
<script>
define('address-bar', `:host{display:flex;height:38px;background:#f7f7f7;align-items:center;border-top:1px solid #bdbdbd}
.u{display:flex;align-items:center;height:30px;background:#fff;border-radius:4px;box-shadow:0 0 3px #0002;width:1264px;margin-left:19px;flex:none}
b{font-weight:400;color:#111}`,
  `${line(0,[mid(28,16,ic('back',16)),mid(72,16,ic('fwd',16)),mid(116,18,ic('reload',17))])}
  <span class="u">${line(144,[mid(166,16,ic('lock',16)),[188,370,fit(370,'https://<b>jitsimeet03.educa.madrid.org</b>/SMRVespertino','font-size:15px;color:#777;margin-top:-2px')],mid(1314,16,ic('mic',16)),mid(1352,16,ic('key',15)),mid(1388.5,18,ic('starp',17))])}</span>
  ${line(1408,[mid(1436,18,ic('starl',16)),mid(1480.5,18,ic('coll',17)),mid(1526,22,ic('user',22)),mid(1572,16,ic('dots',16))])}`);

define('favorites-bar', ':host{display:flex;height:33px;background:#f7f7f7;align-items:center;border-bottom:1px solid #cfcfcf;color:#111;font-size:12px;padding-bottom:5px}fit-text{margin-top:-1px}',
  line(0,[mid(22,16,ic('page',17)),mid(54,16,ic('dbx',16)),[70,103,fit(103,'Archivos - Dropbox')],mid(197.5,16,ic('bing',15)),[213,64,fit(64,'gmail - Bing')],mid(302,16,ic('fb',16)),[318,113,fit(113,'Ayuda para entrar e...')],mid(456,16,ic('duck',16)),[472,114,fit(114,'Safe Decent Rendez...')],mid(610,16,ic('folder',17)),[626,76,fit(76,'Nueva carpeta')],[1472,1,'<i style="width:1px;height:16px;background:#ccc"></i>'],mid(1491,16,ic('folder',17)),[1507,79,fit(79,'Otros favoritos')]]));
</script>
<script>
const sep = c=>mid(c,1,'<i style="width:1px;height:12px;background:#ccc"></i>');
const grip = c=>mid(c,2,'<i style="width:0;height:15px;border-left:2px dotted #aaa"></i>');
const endh = (x,w)=>[x,w,`<i style="width:100%;height:18px;background:linear-gradient(#e8e8e8,#999);display:flex;align-items:flex-end;justify-content:center">${ic('car',5)}</i>`];
const hl = (x,w,n)=>[x,w,`<i style="width:100%;height:19px;background:#cce8ff;border:1px solid #a8d4f8;display:flex;align-items:center;justify-content:center">${ic(n,13)}</i>`];
const tool = (c,n,s=13)=>mid(c,12,ic(n,s));
const car = c=>mid(c,5,ic('car',5));
const combo = (x,w,txt,tw)=>[x,w,`<i style="font-style:normal;width:100%;height:17px;background:#fff;border:1px solid #aaa;display:flex;align-items:center;padding-left:2px;font-size:9px;color:#333">${fit(tw,txt)}<b style="margin-left:auto;width:13px;height:15px;background:#e6e6e6;border:1px solid #bbb;display:flex;align-items:center;justify-content:center;color:#555">${ic('chd',7)}</b></i>`];
const menus = [[124,30,'<u>A</u>rchivo'],[163,22,'<u>E</u>ditar'],[194,12,'<u>V</u>er'],[215,28,'<u>I</u>nsertar'],[252,32,'<u>F</u>ormato'],[293,20,'T<u>a</u>bla'],[322,52,'<u>H</u>erramientas'],[383,32,'Ve<u>n</u>tana'],[424,24,'Ay<u>u</u>da']];

define('writer-chrome', `:host{display:block;background:#fff;color:#222;font-size:9px;height:77px}
.r{display:flex;align-items:center}.t1{height:11px}.m{height:19px;border-bottom:1px solid #e3e3e3;padding-top:4px}
.a{height:23px;width:721px;border-bottom:1px solid #ddd;border-right:1px solid #ddd}.b{height:22px}.foot{height:2px;width:1189px;border-bottom:1px solid #888}u{text-underline-offset:1px}`,
`<div class="r t1">${line(120,[mid(128,10,ic('writer',10)),[137,197,fit(197,'5_Comparativa y avisos_p.docx - OpenOffice Writer','font-size:9.5px')],mid(1258,8,ic('min',11)),mid(1291,8,ic('rest',10)),mid(1324.5,8,ic('x',9))])}</div>
<div class="r m">${line(120,[...menus.map(a=>[a[0],a[1],fit(a[1],a[2])]),mid(1334,8,ic('x',7))])}</div>
<div class="r a">${line(120,[grip(123.5),tool(137,'newdoc'),car(150),tool(163,'open',13),car(176),tool(190,'save',12),tool(208,'mailo'),sep(220),hl(223,19,'edit'),sep(245),tool(256,'pdf'),tool(274,'print'),tool(292,'prev'),sep(304),tool(317,'abc'),hl(326,18,'abcr'),tool(359,'cut'),tool(377,'copy'),tool(395,'paste'),car(408),tool(421,'brush',13),sep(433),tool(445,'undo'),car(458),tool(471,'redo'),car(484),sep(491.5),tool(504,'globe',13),tool(521,'table'),car(534),tool(548,'draw'),sep(560),tool(572,'bino'),tool(590,'comp'),tool(608,'gal'),tool(626,'db'),tool(644,'pil',12),tool(662,'zoom'),sep(675),tool(687,'help',13),endh(701,7),grip(713.5),combo(718,73,'<span style="color:#888">Buscar</span>',25),tool(800,'down',12),tool(818,'up',12),endh(832,6)])}</div>
<div class="r b">${line(120,[grip(123.5),tool(137,'styles'),combo(153,107,'List Paragraph',55),combo(267,121,'Calibri',25),combo(394,49,'11',8),tool(458,'N',10),tool(475.5,'C',11),tool(493.5,'Su',11),tool(512,'supA'),tool(530,'subA'),sep(543),tool(554,'al',12),tool(573,'ac',12),tool(591,'ar',12),hl(600,19,'aj'),sep(622),hl(624,19,'num'),tool(651,'bul'),tool(669.5,'outd'),tool(688,'outd'),sep(700),tool(711,'fontc'),car(724),tool(737,'hil'),car(750),tool(763,'bgc'),car(777),endh(785,7)])}</div>
<div class="foot"></div>`);

define('numbering-bar', `:host{display:block;position:absolute;left:20px;top:97px;width:291px;height:40px;background:#fff;box-shadow:0 0 0 1px #ccc;font-size:9.5px;color:#333}
.h{height:17px;background:#b9b7b9;display:flex;align-items:center}.r{height:22px;display:flex;align-items:center}`,
`<div class="h">${line(140,[[142,83,fit(83,'Numeración y viñetas')],mid(404,8,ic('car',10)),mid(420.5,9,ic('x',11))])}</div>
<div class="r">${line(140,[tool(152,'bul',12),hl(161,19,'num'),sep(182),tool(194,'list',12),sep(206.5),tool(218,'la',12),tool(237,'ra',12),tool(255,'la2'),tool(273,'ra2'),sep(284.5),tool(297,'onum',12),sep(309),tool(321,'ua',12),tool(339,'da',12),tool(357,'ua2'),tool(376,'da2'),sep(388),tool(399,'brk',12),tool(418,'opt')])}</div>`);
</script>
<script>
define('share-popup', `:host{display:flex;align-items:center;position:absolute;left:837px;top:59px;width:303px;height:25px;background:#fcfcfc;border:1px solid #bbb;box-shadow:0 0 1px #999;font-size:9px;color:#222}
.g{height:15px;border-left:2px dotted #aaa;margin-left:5px}
ui-icon{margin:0 7px 0 11px}
.b{display:flex;width:79px;height:16px;border-radius:3px;background:#0b5de6;color:#fff;align-items:center;justify-content:center;margin-left:11px}
.s{width:1px;height:14px;background:#ddd;margin:0 7px}
.m{width:15px;height:15px;border-radius:3px;background:#dcdcdc;display:flex;align-items:flex-end;justify-content:center}
.m i{width:8px;height:2px;background:#444;margin-bottom:3px}`,
`<span class="g"></span><ui-icon name="share" size="12"></ui-icon><fit-text w="137">Está compartiendo toda su pantalla.</fit-text><span class="b"><fit-text w="71">Dejar de compartir</fit-text></span><span class="s"></span><span class="m"><i></i></span>`);
</script>
<script>
/* Ruler strip drawn as SVG ticks with real digits. */
function ruler(vert){
  let o='';
  const tick=(p,k)=>vert?`<rect x="${k?8.5:9.5}" y="${p}" width="${k?3:1}" height="1" fill="#333"/>`:`<rect x="${p}" y="${k?7:8}" width="1" height="${k?3:1}" fill="#333"/>`;
  const num=(p,n)=>vert?`<text transform="translate(15 ${p}) rotate(-90)" text-anchor="middle">${n}</text>`:`<text x="${p}" y="12" text-anchor="middle">${n}</text>`;
  if(vert){
    for(let n=19;n<=27;n++){ const p=19.5+(n-19)*55; o+=num(p,n); if(n<27) o+=tick(p+13.7)+tick(p+27.5,1)+tick(p+41.2); }
    o+=tick(5);
  } else {
    o+=num(132,2)+num(186,1);
    for(let n=1;n<=17;n++) o+=num(n==17?1173:242+n*55.05, n==17?1:n);
    for(let i=0;i<17;i++){ const p=242+i*55.05; o+=tick(p+13.7)+tick(p+27.5,1)+tick(p+41.2); }
    for(const p of [90,118,145,173,200,228]) o+=tick(p);
    for(const p of [104,159,214]) o+=tick(p,1);
    for(let i=0;i<11;i++) o+=`<path d="M${378.5+i*68.3} 14v-3M${376+i*68.3} 14.5h5" stroke="#333" stroke-width="1"/>`;
  }
  return o;
}
</script>
<script>
define('doc-view', `:host{display:block;position:relative;background:#aaa;border-left:1px solid #222;overflow:hidden;width:1156px;height:607px;font-family:Lato,sans-serif;font-size:19.3px;color:#111;font-variant-ligatures:none}
.p1{margin-left:55px;height:474px;background:#fff;border-left:1px solid #777;border-bottom:3px solid #050505;position:relative}
.p2{margin:24px 0 0 55px;height:120px;background:#fff;border-left:1px solid #777;border-top:1px solid #333}
.m{position:absolute;left:165px;top:0;width:825px;height:334px;border:2px solid #d0d0d0;border-top:0;border-width:0 1px 2px 1px}
svg{position:absolute;left:0;top:0}
.x{position:relative;display:flex;align-items:baseline;line-height:30px;height:30px}
.s{color:#0b2f66}.j{width:706px;text-align:justify;text-align-last:justify;white-space:nowrap}
.cpu{color:#06204a;font-weight:700;word-spacing:12px}
.cpu u{text-decoration-thickness:2px;text-underline-offset:3px}
.w{text-decoration:underline wavy #e0554f 1px;text-underline-offset:2px}`,
`<div class="p1"><div class="m"></div>
<svg width="1100" height="470"><path d="M262.5 0.5h100" stroke="#111" stroke-width="2"/><path d="M377 .5h3M458 .5h2M489 .5h4M600 .5h4" stroke="#777"/>
<path d="M301.5 155.5H990V240.5H948V271.5H234.5V181.5H301.5z" fill="#bddcf6" stroke="#4090d8" stroke-width="1.3"/></svg>
<div style="height:6px"></div>
<div class="x" style="padding-left:242px">${fit(378,'va a la primera dirección de dicha memoria.')}</div>
<div class="x" style="margin-top:18px;padding-left:201px">${fit(33,'3.4.','margin-right:8px;font-family:Liberation Sans;font-size:20.4px')}${fit(50,'POST:','margin-right:6px')}${fit(563,'es un conjunto de rutinas/programas que chequean el <span class="w">hardware.</span>')}</div>
<div class="x" style="margin-top:69px;padding-left:235px">${fit(51,'3.4.1.','font-family:Liberation Sans;font-size:20.4px;margin-right:16px')}<fit-text w="205" class="cpu"><u>COMPROBACIÓN CPU</u></fit-text><span class="s j" style="width:483px">: se ejecuta un código verificador compuesto de</span></div>
<div class="x" style="padding-left:284px"><span class="s j">operaciones que afecten los <span class="w">flags</span>/registros y se comprueban las condiciones de</span></div>
<div class="x" style="padding-left:284px"><span class="s j">salto condicionado, de modo que ante cualquier mal funcionamiento se salte a</span></div>
<div class="x" style="padding-left:284px">${fit(664,'una rutina error en donde lo que se ejecuta es un HALT (parada del sistema).','color:#0b2f66')}</div>
<svg width="1100" height="470"><path d="M947.5 260.5h2.5M952.5 260.5h-2.5M950 260.5v11M947.5 271.5h5" stroke="#222" fill="none"/></svg>
</div><div class="p2"></div>`);
</script>
<script>
const ssep = c=>mid(c,1,'<i class="sep"></i>');
const tray = [1052,1070,1087,1105,1121.5,1140,1157,1174.5,1192,1210,1227.5,1244.5].map((c,i)=>mid(c,12,ic('t'+(i+1),12)));
define('shared-screen', `:host{display:flex;flex-direction:column;position:relative;width:1222px;height:757px;background:#f2f2f3;flex:none;overflow:hidden;box-shadow:0 0 22px 6px #0005}
.mid{display:flex;height:627px;flex:none}
.rul{display:flex;height:20px;align-items:center;background:#f4f4f4;border-bottom:2px solid #111}
svg{display:block;font:9.5px "Open Sans",sans-serif;fill:#333}
.body{display:flex}
.vr{width:20px;flex:none;background:#f0f0f0}
.vs{width:12px;flex:none;background:#f0f0f0;display:flex;flex-direction:column;align-items:center;color:#333;height:627px;padding-top:3px}
.bt{width:11px;height:11px;border:1px solid #aaa;background:#e4e4e4;display:flex;align-items:center;justify-content:center;margin-top:1px}
.side{width:28px;border-left:1px solid #aaa;background:#f3f2f4;margin-left:5px;display:flex;flex-direction:column;align-items:center;flex:none}
.hs{display:flex;height:12px;align-items:center;background:#f0f0f0;width:1194px;flex:none}
.st{display:flex;align-items:center;height:16px;background:#f5f3f5;font-size:9px;color:#222;flex:none;padding-top:2px}
.tb{display:flex;align-items:center;height:28px;background:#d9e5f2;color:#111;--cut:#d9e5f2;flex:none}
.sep{width:1px;height:12px;background:#bbb}`,
`<writer-chrome></writer-chrome>
<div class="mid"><div style="width:1177px;flex:none">
<div class="rul"><svg width="1177" height="16"><rect x="76.5" y="1.5" width="165" height="12" fill="#efedf0" stroke="#aaa"/><rect x="242" y="1" width="826" height="13" fill="#fff"/><path d="M1068.5 1.5H1180M1068.5 14H1180" stroke="#bbb"/><rect x="3.5" y=".5" width="13" height="13" fill="#f8f8f8" stroke="#aaa"/><path d="M8.5 4v5h5" stroke="#111" stroke-width="2" fill="none"/>${ruler(false)}<path d="M308.5 1.5h7l-3.5 5zM308.5 13.5h7l-3.5-6zM1064.5 13.5h7l-3.5-6z" fill="#fff" stroke="#555"/></svg></div>
<div class="body"><div class="vr"><svg width="20" height="606"><rect x="4" y="0" width="13" height="334" fill="#fff"/><rect x="4.5" y="334.5" width="12" height="136" fill="#efedf0" stroke="#aaa"/>${ruler(true)}</svg></div><doc-view></doc-view></div></div>
<div class="vs">${ic('chu',8)}<i style="width:11px;height:23px;background:#cdcdcd;margin-top:359px;flex:none"></i><i style="height:185px;flex:none"></i>${ic('chd',8)}<span class="bt" style="margin-top:4px">${ic('dup',8)}</span><span class="bt">${ic('ball',8)}</span><span class="bt">${ic('ddn',8)}</span></div>
<div class="side"><i style="height:8px"></i>${ic('smenu',10)}<i style="width:18px;height:1px;background:#ddd;margin-top:7px"></i><span style="width:23px;height:23px;border:1px solid #b5b5b5;background:#ebebeb;margin-top:4px;display:flex;align-items:center;justify-content:center">${ic('cube',17)}</span><i style="height:5px"></i>${ic('party',17)}<i style="height:9px"></i>${ic('pics',17)}<i style="height:9px"></i>${ic('navi',17)}<i style="height:180px"></i><i style="width:0;height:26px;border-left:2px dotted #777;margin-right:34px"></i></div></div>
<div class="hs">${line(120,[mid(127,6,ic('chl',7)),[133,1050,'<i style="width:100%;height:11px;background:#cdcdcd"></i>'],mid(1290.5,7,ic('chr',8))])}</div>
<div class="st">${line(120,[[127,48,fit(48,'Página &nbsp;6 / 9')],ssep(338.5),[343,62,fit(62,'Predeterminado')],ssep(563.5),[646,65,fit(65,'Español (España)')],ssep(795.5),[799,28,fit(28,'INSERT')],ssep(833),[835.5,15,fit(15,'STD')],ssep(856.5),[859,4,'*'],ssep(867.5),ssep(889),[981,76,fit(76,'WWNum3 : Nivel &nbsp;3')],ssep(1150.5),mid(1159.5,8,ic('p1',10)),mid(1174,14,ic('p2',13)),mid(1192,13,ic('p3',12)),ssep(1205.5),mid(1214,8,ic('zmin',9)),[1221,72,'<svg width="72" height="12"><path d="M0 6h71M21.5 2v8M35.5 2v8" stroke="#999"/><circle cx="42" cy="6" r="3.3" fill="#3c6b94"/></svg>'],mid(1299.5,8,ic('zplus',9)),ssep(1309.5),[1313,23,fit(23,'200 %')]])}</div>
<div class="tb">${line(120,[mid(137.5,13,ic('win',13)),[155.5,249.5,`<i style="font-style:normal;width:100%;height:100%;background:#fff;border:1px solid #ccc;display:flex;align-items:center;padding-left:8px;font-size:10.5px;color:#444">${ic('mag',12)}${fit(117,'Escribe aquí para buscar','margin-left:8px')}</i>`],mid(422.5,14,ic('tview',12)),mid(460,18,ic('ecl',17)),mid(495,17,ic('expl',16)),mid(531,18,ic('mailw',17)),mid(567,18,ic('edge',17)),mid(602,18,ic('ff',17)),mid(637.5,16,ic('vbox',16)),mid(674,16,ic('hex',17)),mid(710,16,ic('dbg',17)),mid(745,17,ic('paint',17)),[764,34,`<i style="width:100%;height:100%;background:#eef5fb;display:flex;align-items:center;justify-content:center">${ic('writer',17)}</i>`],...tray,[1255,48,`<i style="font-style:normal;font-size:9px;line-height:12.5px;display:flex;flex-direction:column;align-items:center;margin-top:-2px;color:#333">${fit(20,'16:32')}${fit(42,'06/04/2021')}</i>`],mid(1319,14,ic('note',13)),[1338.5,1,'<i style="width:1px;height:25px;background:#aab"></i>']])}</div>
<numbering-bar></numbering-bar><share-popup></share-popup>`);
</script>
<script>
define('video-tile', `:host{display:block;position:relative;width:120px;height:120px;border-radius:4px;background:#000;flex:none;overflow:hidden}
.c{display:flex;align-items:center;justify-content:center;height:100%}
.av{border-radius:50%;display:flex;align-items:center;justify-content:center;font-family:"Liberation Sans",Arial,sans-serif;color:#ffffff99;flex:none}
.r{position:absolute;right:9px;bottom:5px;display:flex;gap:5px}.l{position:absolute;left:4px;bottom:9px}`,
 el=>{const s=+(el.getAttribute('av')||60);return `<div class="c"><span class="av" style="width:${s}px;height:${s}px;background:${el.getAttribute('color')};font-size:${s*.53}px"><slot></slot></span></div><div class="l">${s>40?ic('more',10):''}</div><div class="r" style="${el.hasAttribute('star')?'right:5px':''}">${ic('micoff',12)}${ic('camoff',12)}${el.hasAttribute('star')?ic('star',12):''}</div>`;});

define('speaker-tile', `:host{display:block;position:relative;width:124px;height:124px;margin:-2px;border:2px solid #1760d3;border-radius:5px;background:#303030;flex:none;overflow:hidden;color:#fff}
svg{position:absolute;left:0;top:0}
.n{position:absolute;left:38px;top:52px;font:bold 12px/20px "Liberation Sans",Arial,sans-serif}
.h{position:absolute;left:5px;top:5px;width:22px;height:22px;border-radius:50%;border:2px solid #fff;background:#1760d3;display:flex;align-items:center;justify-content:center}
.l{position:absolute;left:4px;bottom:9px}`,
`<svg width="120" height="120"><path d="M2 3h12M3 6h75M26 8h45M97 11h22M29 19h45M8 27h102" stroke="#161616" stroke-dasharray="2 1.5 4 2"/><path d="M12 44h12v-4h96v18H12z" fill="#1d2c3a"/><path d="M15 42h35M54 42h64M20 46h98M20 50h98M20 54h90" stroke="#10161c" stroke-dasharray="3 1 5 1.5"/><path d="M0 90.5h120M0 94.5h120" stroke="#151515"/><path d="M0 91h120v3H0z" fill="#222"/><path d="M46 115h10M72 115h10M99 115h10M2 118h10M16 118h60M110 118h8" stroke="#101820" stroke-width="2" stroke-dasharray="3 3"/><circle cx="9.5" cy="54" r="2.5" fill="#44658c"/><circle cx="9.5" cy="61" r="2.7" fill="#4a9df0"/><circle cx="9.5" cy="68" r="2.5" fill="#3f5f86"/></svg>
<span class="h">${ic('horn',9)}</span><span class="n">${fit(50,'nantunez')}</span><span class="l">${ic('more',10)}</span>`);
</script>
<script>
define('meeting-view', `:host{display:flex;position:relative;height:757px;overflow:hidden;
background:
linear-gradient(90deg,#0006 0,#0000 95px,#0000 1545px,#0005 1600px),
linear-gradient(#0006 0,#0002 45px,#0000 110px,#0000 640px,#0003 720px,#0007 757px),
radial-gradient(ellipse 150px 170px at 1340px 400px,#a5c8e0 0,#a5c8e000 100%),
radial-gradient(ellipse 150px 120px at 1370px 100px,#c5d9eb 0,#c5d9eb00 100%),
linear-gradient(90deg,#d4d4d4 0,#d8d8d8 200px,#fff 1350px,#fff 1520px,#d8d8d8 1600px)}
.f{display:flex;flex-direction:column;gap:4px;margin-left:120px;width:120px;padding-top:19px}
.hd{width:40px;height:40px;border-radius:50%;background:#bccae3;color:#fff;display:flex;align-items:center;justify-content:center;font:bold 13.5px "Liberation Sans",Arial;position:absolute;left:1410px;top:30px}
.sb{width:7px;height:176px;border-radius:4px;background:#555;margin:544px 0 0 4px}
.wm{position:absolute;left:23px;top:35px;display:flex;align-items:flex-start;color:#fff}`,
`<shared-screen style="margin-left:120px"></shared-screen>
<div class="f"><video-tile av="34" color="#6b4f30" style="height:68px">NO</video-tile><i style="height:5px;background:#000;border-radius:0 0 4px 4px;margin-top:3px"></i><video-tile color="#2b5b4c">MS</video-tile><speaker-tile></speaker-tile><video-tile color="#5c2b3f">ST</video-tile><video-tile color="#343264">JV</video-tile><video-tile color="#2b5b4c" star>MA</video-tile></div>
<div class="sb"></div>
<span style="position:absolute;left:1580px;top:725px;color:#fff">${ic('chr',13)}</span>
<div class="hd">HD</div>
<div class="wm"><svg width="70" height="34"><rect x=".5" y=".5" width="29" height="29" fill="#d0000d" stroke="#eee"/><g fill="#fff"><circle cx="5.5" cy="12.5" r="1.6"/><circle cx="11" cy="12.5" r="1.6"/><circle cx="16.5" cy="12.5" r="1.6"/><circle cx="22" cy="12.5" r="1.6"/><circle cx="8.5" cy="17" r="1.6"/><circle cx="14" cy="17" r="1.6"/><circle cx="19.5" cy="17" r="1.6"/></g><g fill="none" stroke="#fff" transform="translate(1 0)"><path d="M58 2.5a14 14 0 1 0 5 6" stroke-width="3"/><path d="M50.5 7l2.5 5.5 6 .5-4 4.5 1 6-5.5-3-5.5 3 1-6-4-4.5 6-.5z" stroke-width="2.4" stroke-linejoin="round"/></g><circle cx="61.5" cy="5" r="2" fill="#fff"/></svg>
<div style="margin-left:3px">${fit(66,'Jitsi Meet','font-size:13px;line-height:14px;margin-top:-2px;opacity:.75')}${fit(136,'<b>EducaMadrid</b>','font-size:20px;line-height:20px;margin-top:1px')}</div></div>`);
</script>
<script>
define('outer-taskbar', `:host{display:flex;align-items:center;height:40px;color:#fff;--cut:#434343;
background:linear-gradient(90deg,#262331 0,#2b2531 48px,#37282f 400px,#4a1f1f 500px,#3d2023 560px,#242127 605px,#2b2529 690px,#3f3137 760px,#362f36 850px,#434343 940px,#434343 1600px)}
.s{display:flex;align-items:center;height:40px;width:343px;background:#f0f0f0;border:1px solid #bbb;padding-left:13px;color:#333;font-size:14.5px}
.c{display:flex;flex-direction:column;align-items:center;font-size:12px;line-height:18px}
.app{display:flex;flex-direction:column;align-items:center;width:100%;height:40px;justify-content:space-between;padding-top:9px;border-bottom:2px solid #76b9ed}`,
line(0,[mid(24,16,ic('win',16)),[48,343,`<span class="s">${ic('mag',16)}${fit(161,'Escribe aquí para buscar','margin-left:10px')}</span>`],mid(416,16,ic('cort',16)),mid(463.5,18,ic('tview',17)),[495,40,`<span class="app">${ic('expl',21)}</span>`],[540,48,`<span class="app" style="background:#fff2;padding-top:8px">${ic('edge',23)}</span>`],[593,40,`<span class="app">${ic('word',22)}</span>`],mid(1368.5,12,ic('chu',13)),mid(1393,14,ic('o1',15)),mid(1416.5,14,ic('o2',16)),mid(1441,16,ic('o3',17)),mid(1466.5,14,ic('o4',14)),[1483,58,`<span class="c">${fit(27,'16:32')}${fit(57,'06/04/2021')}</span>`],mid(1567,17,ic('note',17)),[1595,1,'<i style="width:1px;height:40px;background:#777"></i>']]));

define('activation-mark', ':host{display:block;position:absolute;left:1258px;top:772px;color:#8a8a8a;opacity:.62}', `${fit(147,'Activar Windows','font-size:19px;line-height:29px')}${fit(275,'Ve a Configuración para activar Windows.','font-size:14.5px;line-height:18px')}`);

define('desktop-app', ':host{display:block;position:relative;width:1600px;height:900px;overflow:hidden}', '<tab-strip></tab-strip><address-bar></address-bar><favorites-bar></favorites-bar><meeting-view></meeting-view><outer-taskbar></outer-taskbar><activation-mark></activation-mark>');
</script>
</body>
</html>
